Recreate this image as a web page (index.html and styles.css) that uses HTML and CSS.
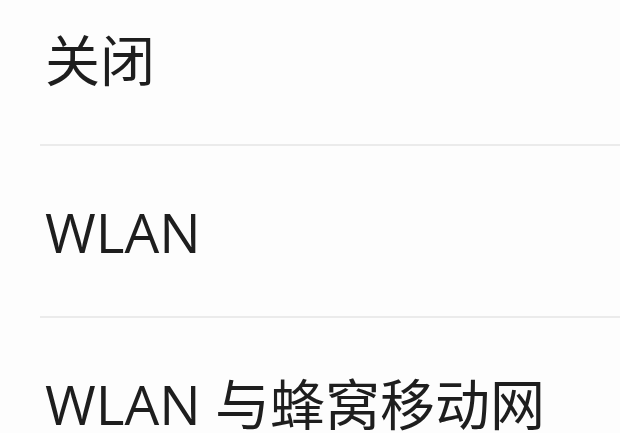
FILE: index.html
```html
<!DOCTYPE html>
<html lang="zh-CN">

<head>
    <meta charset="UTF-8">
    <meta name="viewport" content="width=device-width, initial-scale=1.0">
    <title>自动更新</title>
    <link rel="stylesheet" href="styles.css">
</head>

<body>
    <ul class="lista-opciones">
        <li class="opcion">关闭</li>
        <li class="opcion">WLAN</li>
        <li class="opcion">WLAN 与蜂窝移动网</li>
    </ul>
</body>

</html>
```

FILE: styles.css
```css
body {
    margin: 0;
    background-color: #fdfdfd;
    font-family: "Open Sans", "Noto Sans CJK SC", sans-serif;
    color: #1e1e1e;
    overflow: hidden;
}

.lista-opciones {
    list-style: none;
    margin: -26px 0 0 40px;
    padding: 0;
}

.opcion {
    height: 170px;
    display: flex;
    align-items: center;
    padding-left: 5px;
    font-size: 55px;
    line-height: 1;
    border-bottom: 2px solid #ebebeb;
}
```
